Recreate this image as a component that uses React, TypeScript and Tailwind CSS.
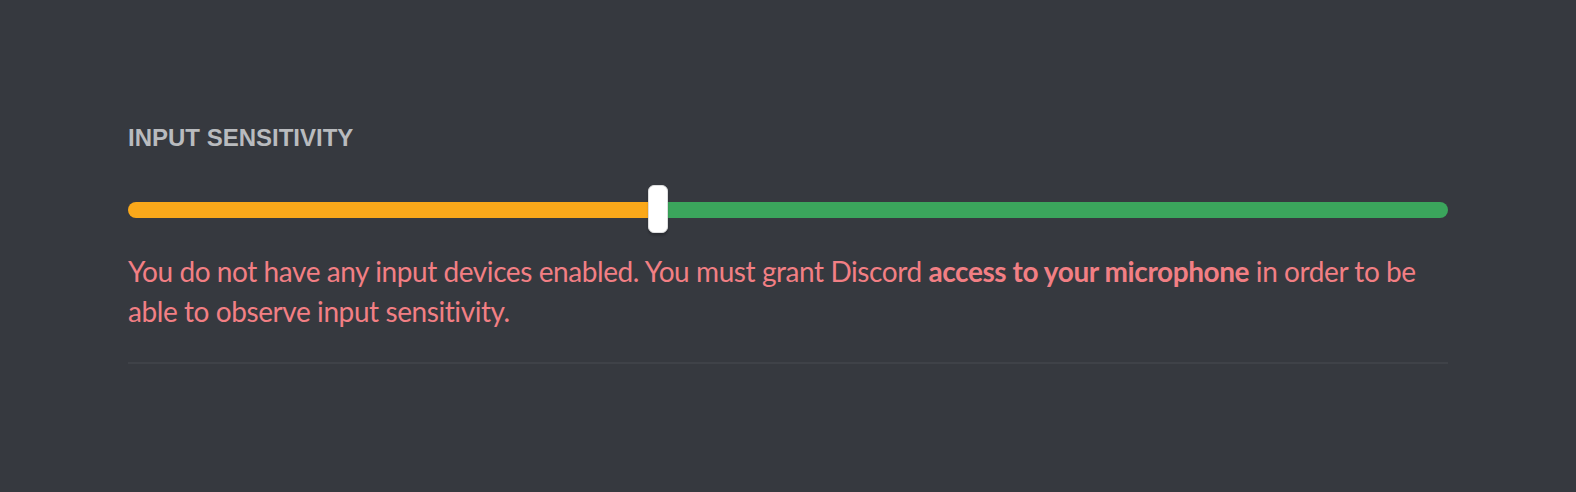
import { useState } from "react";

const SensitivitySlider = ({ value }: { value: number }) => {
    return (
        <div className="relative h-[48px] flex items-center">
            {/* track: below threshold is orange, above is green */}
            <div className="w-full h-[16px] rounded-full overflow-hidden flex mt-[2px]">
                <div className="h-full bg-[#faa81a]" style={{ width: `${value}%` }} />
                <div className="h-full flex-1 bg-[#3ba55c]" />
            </div>
            <div
                className="absolute top-0 w-[20px] h-[48px] rounded-[6px] bg-white border border-[#dcddde] shadow-[0_3px_1px_0_rgba(0,0,0,0.05),0_2px_2px_0_rgba(0,0,0,0.1),0_3px_3px_0_rgba(0,0,0,0.05)]"
                style={{ left: `calc(${value}% - 8px)` }}
            />
        </div>
    );
};

export default function App() {
    const [threshold] = useState(40);

    return (
        <div className="w-full h-[492px] bg-[#36393f] px-[128px] pt-[126px] font-['Liberation_Sans',Arial,sans-serif]">
            <h2 className="text-[24px] leading-[24px] font-bold uppercase text-[#b9bbbe]">Input Sensitivity</h2>

            <div className="mt-[35px]">
                <SensitivitySlider value={threshold} />
            </div>

            <p className="mt-[18px] font-['Lato',sans-serif] text-[28px] leading-[40px] tracking-[-0.015em] text-[#f27f84]">
                You do not have any input devices enabled. You must grant Discord{" "}
                <strong className="font-bold">access to your microphone</strong> in order to be able to observe input
                sensitivity.
            </p>

            <div className="mt-[31px] h-[2px] bg-[#3f4248]" />
        </div>
    );
}
